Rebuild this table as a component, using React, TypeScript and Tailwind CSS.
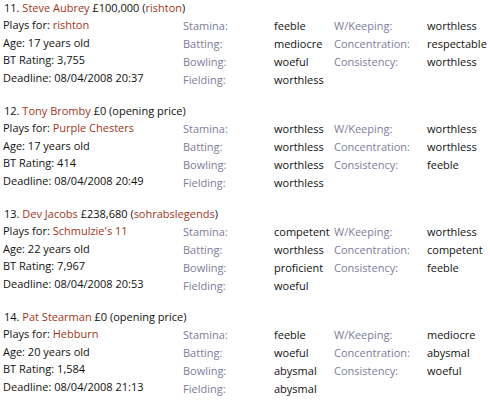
const players = [
  {
    num: 11,
    name: "Steve Aubrey",
    price: "£100,000",
    bidder: "rishton",
    team: "rishton",
    age: "17 years old",
    rating: "3,755",
    deadline: "08/04/2008 20:37",
    skills: ["feeble", "mediocre", "woeful", "worthless"],
    extra: ["worthless", "respectable", "worthless"],
  },
  {
    num: 12,
    name: "Tony Bromby",
    price: "£0",
    bidder: null,
    team: "Purple Chesters",
    age: "17 years old",
    rating: "414",
    deadline: "08/04/2008 20:49",
    skills: ["worthless", "worthless", "worthless", "worthless"],
    extra: ["worthless", "worthless", "feeble"],
  },
  {
    num: 13,
    name: "Dev Jacobs",
    price: "£238,680",
    bidder: "sohrabslegends",
    team: "Schmulzie's 11",
    age: "22 years old",
    rating: "7,967",
    deadline: "08/04/2008 20:53",
    skills: ["competent", "worthless", "proficient", "woeful"],
    extra: ["worthless", "competent", "feeble"],
  },
  {
    num: 14,
    name: "Pat Stearman",
    price: "£0",
    bidder: null,
    team: "Hebburn",
    age: "20 years old",
    rating: "1,584",
    deadline: "08/04/2008 21:13",
    skills: ["feeble", "woeful", "abysmal", "abysmal"],
    extra: ["mediocre", "abysmal", "woeful"],
  },
];

const skillLabels = ["Stamina:", "Batting:", "Bowling:", "Fielding:"];
const extraLabels = ["W/Keeping:", "Concentration:", "Consistency:"];

function PlayerBlock({ p }: { p: (typeof players)[number] }) {
  return (
    <div className="h-[103px]">
      <div className="h-[16px] leading-[16px] pl-[4px]">
        {p.num}. <span className="text-[#a3361a]">{p.name}</span> {p.price}{" "}
        {p.bidder ? (
          <>
            (<span className="text-[#a3361a]">{p.bidder}</span>)
          </>
        ) : (
          "(opening price)"
        )}
      </div>
      <div className="flex">
        <div className="w-[183px] pl-[3px] leading-[17.7px]">
          <div>
            Plays for: <span className="text-[#a3361a]">{p.team}</span>
          </div>
          <div>Age: {p.age}</div>
          <div>BT Rating: {p.rating}</div>
          <div>Deadline: {p.deadline}</div>
        </div>
        <div className="grid grid-cols-[91px_60px_93px_auto] leading-[18px] pt-[1px]">
          {skillLabels.map((label, i) => (
            <div key={label} className="contents">
              <div className="text-[#7d7d9b]">{label}</div>
              <div>{p.skills[i]}</div>
              <div className="text-[#7d7d9b]">{extraLabels[i] ?? ""}</div>
              <div>{p.extra[i] ?? ""}</div>
            </div>
          ))}
        </div>
      </div>
    </div>
  );
}

export default function App() {
  return (
    <div
      className="w-[490px] h-[400px] bg-white text-[#111111] text-[11px] overflow-hidden"
      style={{ fontFamily: '"Open Sans", sans-serif' }}
    >
      {players.map((p) => (
        <PlayerBlock key={p.num} p={p} />
      ))}
    </div>
  );
}
